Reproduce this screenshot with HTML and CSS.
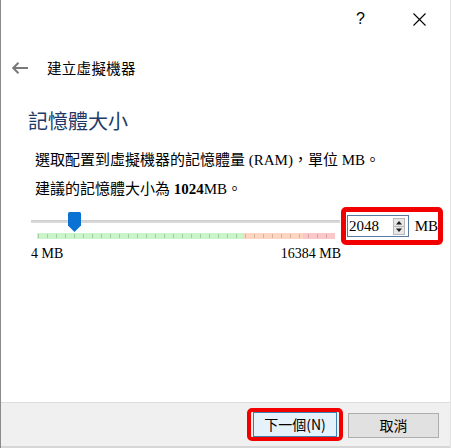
FILE: index.html
```html
<!DOCTYPE html>
<html lang="zh-Hant">
<head>
<meta charset="utf-8">
<link rel="stylesheet" href="styles.css">
</head>
<body>
<div class="window">
  <div class="titlebar">
    <span class="help">?</span>
    <svg class="close" width="13" height="13" viewBox="0 0 13 13"><path d="M0.5 0.5 L12.5 12.5 M12.5 0.5 L0.5 12.5" stroke="#000" stroke-width="1.1" fill="none"/></svg>
  </div>
  <div class="nav">
    <svg class="back" width="17" height="12" viewBox="0 0 17 12"><path d="M1 6 H16 M6.5 0.8 L1.2 6 L6.5 11.2" stroke="#7a7a7a" stroke-width="2" fill="none"/></svg>
    <span class="navtitle">建立虛擬機器</span>
  </div>
  <div class="content">
    <h1 class="heading">記憶體大小</h1>
    <p class="text first">選取配置到虛擬機器的記憶體量 (RAM)，單位 MB。</p>
    <p class="text">建議的記憶體大小為 <b>1024</b>MB。</p>
    <div class="sliderrow">
      <div class="slider">
        <div class="track"></div>
        <div class="thumb"><svg width="13" height="20" viewBox="0 0 13 20"><path d="M1.5 0 H11.5 Q13 0 13 1.5 V13.5 L6.5 20 L0 13.5 V1.5 Q0 0 1.5 0 Z" fill="#0b72d4"/></svg></div>
        <div class="scale">
          <span class="seg green"></span><span class="seg orange"></span><span class="seg pink"></span>
        </div>
      </div>
      <div class="hilite">
        <div class="spin">
          <span class="val">2048</span>
          <span class="arrows">
            <svg width="12" height="17" viewBox="0 0 12 17"><rect x="0.5" y="0.5" width="11" height="16" fill="#e6e6e6" stroke="#b9b9b9"/><line x1="1" y1="8.5" x2="11" y2="8.5" stroke="#b9b9b9"/><path d="M3 6.5 L6 3 L9 6.5 Z M3 10.5 L6 14 L9 10.5 Z" fill="#1a1a1a"/></svg>
          </span>
        </div>
        <span class="unit">MB</span>
      </div>
    </div>
    <div class="labels"><span>4 MB</span><span>16384 MB</span></div>
  </div>
  <div class="footer">
    <div class="btnhilite"><button class="btn primary">下一個(N)</button></div>
    <button class="btn cancel">取消</button>
  </div>
</div>
</body>
</html>
```
FILE: styles.css
```css
* { box-sizing: border-box; }
html, body { margin: 0; padding: 0; background: #fff; }
.window {
  width: 451px;
  height: 448px;
  display: flex;
  flex-direction: column;
  border-left: 1px solid #8a8a8a;
  border-right: 1px solid #e2e2e2;
  background: #fff;
  font-family: "Noto Sans CJK TC", sans-serif;
  color: #000;
}
.titlebar {
  height: 40px;
  display: flex;
  align-items: center;
  justify-content: flex-end;
  padding-right: 24px;
  gap: 48px;
}
.help {
  font-family: "Liberation Sans", sans-serif;
  font-size: 16px;
  line-height: 20px;
  margin-top: -2px;
}
.close { margin-top: -2px; }
.nav {
  margin-top: 16px;
  height: 24px;
  display: flex;
  align-items: center;
  padding-left: 11px;
}
.navtitle {
  margin-left: 18px;
  font-size: 14.5px;
  line-height: 24px;
  letter-spacing: 0.3px;
}
.content {
  flex: 1;
  padding-left: 27px;
}
.heading {
  margin: 28px 0 0 0;
  font-size: 20px;
  font-weight: 400;
  line-height: 26px;
  color: #1f3a68;
}
.text {
  margin: 0;
  padding-left: 7px;
  font-family: "Liberation Serif", "Noto Sans CJK TC", serif;
  font-size: 15px;
  line-height: 29px;
}
.text.first { margin-top: 12px; }
.text b { font-weight: 700; }
.sliderrow {
  margin-top: 3px;
  display: flex;
  height: 38px;
}
.slider {
  position: relative;
  width: 310px;
  margin-left: 3px;
}
.track {
  margin-top: 13px;
  height: 3px;
  width: 309px;
  background: #d9d9d9;
  border-top: 1px solid #cfcfcf;
}
.thumb {
  position: absolute;
  left: 37px;
  top: 5px;
  line-height: 0;
}
.scale {
  margin-top: 10px;
  margin-left: 6px;
  display: flex;
  height: 6px;
  width: 298px;
  background-image: repeating-linear-gradient(to right, rgba(110,110,110,0.55) 0, rgba(110,110,110,0.55) 1px, transparent 1px, transparent 9px);
  background-position: 1px 1px;
  background-size: 297px 4px;
  background-repeat: no-repeat;
}
.seg { display: block; height: 6px; }
.green { width: 206px; background: rgba(150, 235, 150, 0.5); }
.orange { width: 60px; background: rgba(250, 180, 145, 0.55); }
.pink { width: 32px; background: rgba(245, 155, 155, 0.55); }
.hilite {
  width: 102px;
  height: 38px;
  border: 5px solid #f20000;
  border-radius: 5px;
  display: flex;
  align-items: center;
  padding-left: 1px;
}
.spin {
  width: 62px;
  height: 22px;
  border: 1px solid #5a7aa6;
  display: flex;
  align-items: center;
  justify-content: space-between;
  padding: 0 3px 0 1px;
  background: #fff;
}
.val {
  font-family: "Liberation Serif", serif;
  font-size: 15px;
  line-height: 18px;
}
.arrows { line-height: 0; }
.unit {
  margin-left: 6px;
  font-family: "Liberation Serif", serif;
  font-size: 15px;
}
.labels {
  margin-top: 1px;
  width: 313px;
  display: flex;
  justify-content: space-between;
  padding-left: 3px;
  font-family: "Liberation Serif", serif;
  font-size: 14px;
  line-height: 16px;
}
.footer {
  height: 46px;
  border-top: 1px solid #dcdcdc;
  border-bottom: 2px solid #d6d6d6;
  background: #f0f0f0;
  display: flex;
  align-items: center;
  justify-content: flex-end;
  padding-right: 11px;
  gap: 5px;
}
.btnhilite {
  border: 4px solid #f20000;
  border-radius: 5px;
  padding: 0 2px;
  height: 33px;
  display: flex;
  align-items: center;
  background: #f0f0f0;
}
.btn {
  font-family: "Noto Sans CJK TC", sans-serif;
  font-size: 14px;
  height: 25px;
  padding: 0;
  line-height: 23px;
  color: #000;
}
.primary {
  width: 84px;
  background: #e5f1fb;
  border: 1px solid #3c7fb1;
}
.cancel {
  width: 91px;
  margin-top: 2px;
  background: #e1e1e1;
  border: 1px solid #adadad;
}
```
